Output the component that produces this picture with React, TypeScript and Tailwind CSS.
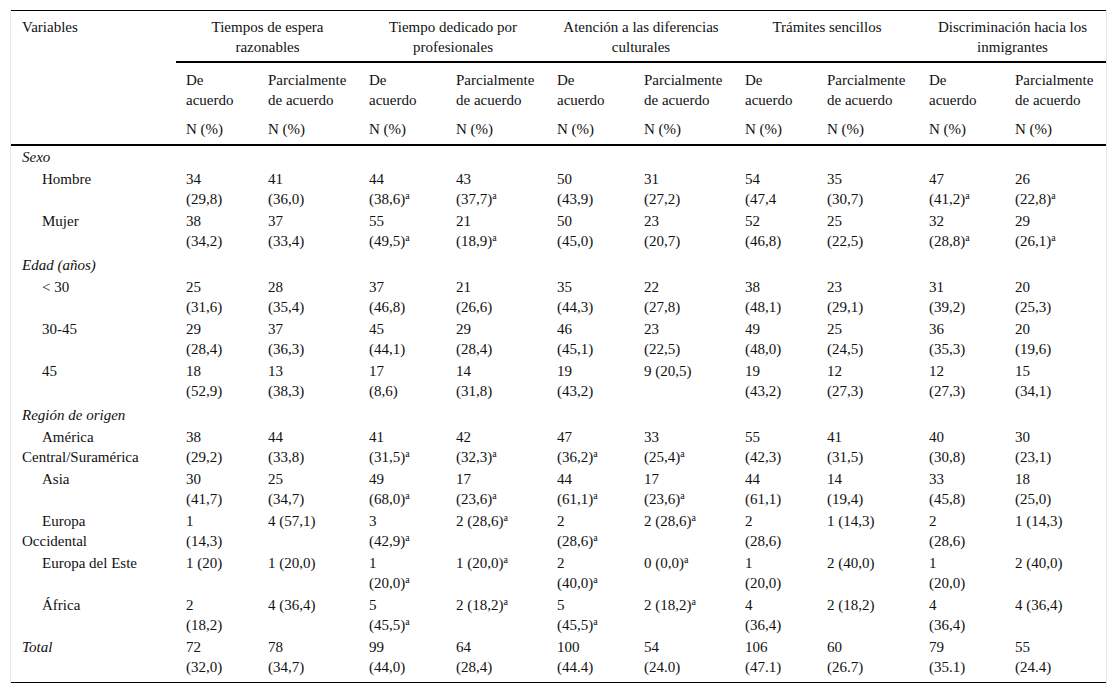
type Row = { label: string; kind: "section" | "item" | "total"; cells?: string[]; gap?: boolean };

const rows: Row[] = [
  { label: "Sexo", kind: "section" },
  { label: "Hombre", kind: "item", cells: ["34|(29,8)", "41|(36,0)", "44|(38,6)^", "43|(37,7)^", "50|(43,9)", "31|(27,2)", "54|(47,4", "35|(30,7)", "47|(41,2)^", "26|(22,8)^"] },
  { label: "Mujer", kind: "item", cells: ["38|(34,2)", "37|(33,4)", "55|(49,5)^", "21|(18,9)^", "50|(45,0)", "23|(20,7)", "52|(46,8)", "25|(22,5)", "32|(28,8)^", "29|(26,1)^"] },
  { label: "Edad (años)", kind: "section", gap: true },
  { label: "< 30", kind: "item", cells: ["25|(31,6)", "28|(35,4)", "37|(46,8)", "21|(26,6)", "35|(44,3)", "22|(27,8)", "38|(48,1)", "23|(29,1)", "31|(39,2)", "20|(25,3)"] },
  { label: "30-45", kind: "item", cells: ["29|(28,4)", "37|(36,3)", "45|(44,1)", "29|(28,4)", "46|(45,1)", "23|(22,5)", "49|(48,0)", "25|(24,5)", "36|(35,3)", "20|(19,6)"] },
  { label: "45", kind: "item", cells: ["18|(52,9)", "13|(38,3)", "17|(8,6)", "14|(31,8)", "19|(43,2)", "9 (20,5)", "19|(43,2)", "12|(27,3)", "12|(27,3)", "15|(34,1)"] },
  { label: "Región de origen", kind: "section", gap: true },
  { label: "América Central/Suramérica", kind: "item", cells: ["38|(29,2)", "44|(33,8)", "41|(31,5)^", "42|(32,3)^", "47|(36,2)^", "33|(25,4)^", "55|(42,3)", "41|(31,5)", "40|(30,8)", "30|(23,1)"] },
  { label: "Asia", kind: "item", cells: ["30|(41,7)", "25|(34,7)", "49|(68,0)^", "17|(23,6)^", "44|(61,1)^", "17|(23,6)^", "44|(61,1)", "14|(19,4)", "33|(45,8)", "18|(25,0)"] },
  { label: "Europa Occidental", kind: "item", cells: ["1|(14,3)", "4 (57,1)", "3|(42,9)^", "2 (28,6)^", "2|(28,6)^", "2 (28,6)^", "2|(28,6)", "1 (14,3)", "2|(28,6)", "1 (14,3)"] },
  { label: "Europa del Este", kind: "item", cells: ["1 (20)", "1 (20,0)", "1|(20,0)^", "1 (20,0)^", "2|(40,0)^", "0 (0,0)^", "1|(20,0)", "2 (40,0)", "1|(20,0)", "2 (40,0)"] },
  { label: "África", kind: "item", cells: ["2|(18,2)", "4 (36,4)", "5|(45,5)^", "2 (18,2)^", "5|(45,5)^", "2 (18,2)^", "4|(36,4)", "2 (18,2)", "4|(36,4)", "4 (36,4)"] },
  { label: "Total", kind: "total", cells: ["72|(32,0)", "78|(34,7)", "99|(44,0)", "64|(28,4)", "100|(44.4)", "54|(24.0)", "106|(47.1)", "60|(26.7)", "79|(35.1)", "55|(24.4)"] },
];

const groups = [
  "Tiempos de espera razonables",
  "Tiempo dedicado por profesionales",
  "Atención a las diferencias culturales",
  "Trámites sencillos",
  "Discriminación hacia los inmigrantes",
];

const widths = [165, 82, 101, 87, 101, 87, 101, 82, 102, 86, 101];

function Value({ text }: { text: string }) {
  return (
    <>
      {text.split("|").map((line, i) => {
        const sup = line.endsWith("^");
        return (
          <span key={i} className="block">
            {sup ? line.slice(0, -1) : line}
            {sup && <sup className="text-[10px]">a</sup>}
          </span>
        );
      })}
    </>
  );
}

export default function App() {
  return (
    <div className="min-h-[695px] bg-white pt-[10px] [font-family:'Liberation_Serif','Times_New_Roman',serif] text-[15px] leading-5 text-[#111]">
      <div className="ml-[10px] w-[1097px] border-x border-[#e6e6e6]">
        <table className="w-full table-fixed border-collapse border-y border-black">
          <colgroup>
            {widths.map((w, i) => (
              <col key={i} style={{ width: w }} />
            ))}
          </colgroup>
          <thead>
            <tr>
              <th rowSpan={3} className="border-b-2 border-black pl-[11px] pt-[6px] text-left align-top font-normal">
                Variables
              </th>
              {groups.map((g) => (
                <th key={g} colSpan={2} className="border-b-2 border-black px-[10px] pt-[6px] pb-[4px] text-center align-top font-normal">
                  {g}
                </th>
              ))}
            </tr>
            <tr>
              {groups.flatMap((g) => [
                <th key={g + "a"} className="pl-[10px] pt-[7px] pb-[4px] text-left align-top font-normal">
                  De
                  <br />
                  acuerdo
                </th>,
                <th key={g + "b"} className="pl-[10px] pt-[7px] pb-[4px] text-left align-top font-normal">
                  Parcialmente de acuerdo
                </th>,
              ])}
            </tr>
            <tr>
              {groups.flatMap((g) => [
                <th key={g + "c"} className="border-b-2 border-black pl-[10px] pt-[5px] pb-[5px] text-left align-top font-normal">
                  N (%)
                </th>,
                <th key={g + "d"} className="border-b-2 border-black pl-[10px] pt-[5px] pb-[5px] text-left align-top font-normal">
                  N (%)
                </th>,
              ])}
            </tr>
          </thead>
          <tbody>
            {rows.map((r, idx) => {
              const pad = r.gap ? "pt-[3px] pb-[1px]" : idx === rows.length - 1 ? "pt-[1px] pb-[5px]" : "py-[1px]";
              if (r.kind === "section") {
                return (
                  <tr key={r.label}>
                    <td colSpan={11} className={`pl-[11px] italic ${pad}`}>
                      {r.label}
                    </td>
                  </tr>
                );
              }
              return (
                <tr key={r.label}>
                  <td className={`pl-[11px] pr-[30px] align-top ${r.kind === "item" ? "indent-[20px]" : "italic"} ${pad}`}>
                    {r.label}
                  </td>
                  {r.cells!.map((c, i) => (
                    <td key={i} className={`pl-[10px] align-top ${pad}`}>
                      <Value text={c} />
                    </td>
                  ))}
                </tr>
              );
            })}
          </tbody>
        </table>
      </div>
    </div>
  );
}
